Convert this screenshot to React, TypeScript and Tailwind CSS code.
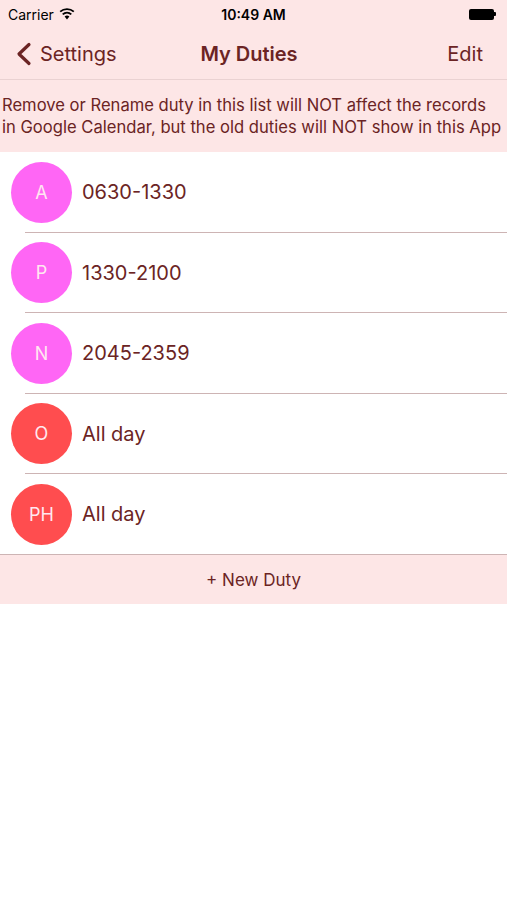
import React from "react";

type Duty = { code: string; label: string; color: string };

const duties: Duty[] = [
  { code: "A", label: "0630-1330", color: "bg-[#ff66f5]" },
  { code: "P", label: "1330-2100", color: "bg-[#ff66f5]" },
  { code: "N", label: "2045-2359", color: "bg-[#ff66f5]" },
  { code: "O", label: "All day", color: "bg-[#ff4d4f]" },
  { code: "PH", label: "All day", color: "bg-[#ff4d4f]" },
];

const App: React.FC = () => {
  return (
    <div className="w-[507px] h-[900px] bg-white font-['Inter','Liberation_Sans',sans-serif] text-[#6b2424]">
      {/* status bar + nav */}
      <div className="bg-[#fde6e6] border-b border-[#ead2d2]">
        <div className="h-[28px] flex items-center justify-between px-[8px] text-[14px] text-black">
          <div className="flex items-center gap-[5px] w-[120px]">
            <span>Carrier</span>
            <svg width="16" height="12" viewBox="0 0 16 12">
              <path d="M8 11.5 L5.6 8.6 A3.6 3.6 0 0 1 10.4 8.6 Z" fill="#000" />
              <path d="M3.7 6.4 A6.4 6.4 0 0 1 12.3 6.4" stroke="#000" strokeWidth="1.8" fill="none" />
              <path d="M1.2 3.7 A10 10 0 0 1 14.8 3.7" stroke="#000" strokeWidth="1.8" fill="none" />
            </svg>
          </div>
          <span className="font-semibold">10:49 AM</span>
          <div className="w-[120px] flex justify-end pr-[3px]">
            <div className="flex items-center">
              <div className="w-[25px] h-[11px] bg-black rounded-[2px]" />
              <div className="w-[2px] h-[4px] bg-black rounded-r-[1px]" />
            </div>
          </div>
        </div>
        <div className="h-[51px] flex items-center pl-[15px] pr-[24px] text-[20px]">
          <div className="flex-1 flex items-center gap-[8px]">
            <svg width="17" height="24" viewBox="0 0 17 24">
              <path d="M14 2.5 L4 12 L14 21.5" stroke="#6b2424" strokeWidth="3.2" fill="none" strokeLinecap="round" strokeLinejoin="round" />
            </svg>
            <span>Settings</span>
          </div>
          <span className="font-semibold">My Duties</span>
          <span className="flex-1 text-right">Edit</span>
        </div>
      </div>

      {/* info */}
      <div className="bg-[#fde6e6] h-[72px] flex flex-col justify-center pl-[2px] text-[16.6px] leading-[22px] whitespace-nowrap">
        <p>Remove or Rename duty in this list will NOT affect the records</p>
        <p>in Google Calendar, but the old duties will NOT show in this App</p>
      </div>

      {/* list */}
      <div>
        {duties.map((d, i) => (
          <div key={d.code} className="h-[80.5px] flex flex-col">
            <div className="flex-1 flex items-center pl-[11px] gap-[10px] pt-px">
              <div
                className={`w-[61px] h-[61px] rounded-full ${d.color} flex items-center justify-center text-[#ffe8f0] text-[18px]`}
              >
                {d.code}
              </div>
              <span className="text-[20px]">{d.label}</span>
            </div>
            <div
              className={
                i === duties.length - 1
                  ? "h-px bg-[#cdb4b4]"
                  : "h-px bg-[#cdb4b4] ml-[25px]"
              }
            />
          </div>
        ))}
      </div>

      <div className="bg-[#fde6e6] h-[49px] flex items-center justify-center text-[17px] pt-[3px]">
        + New Duty
      </div>
    </div>
  );
};

export default App;
